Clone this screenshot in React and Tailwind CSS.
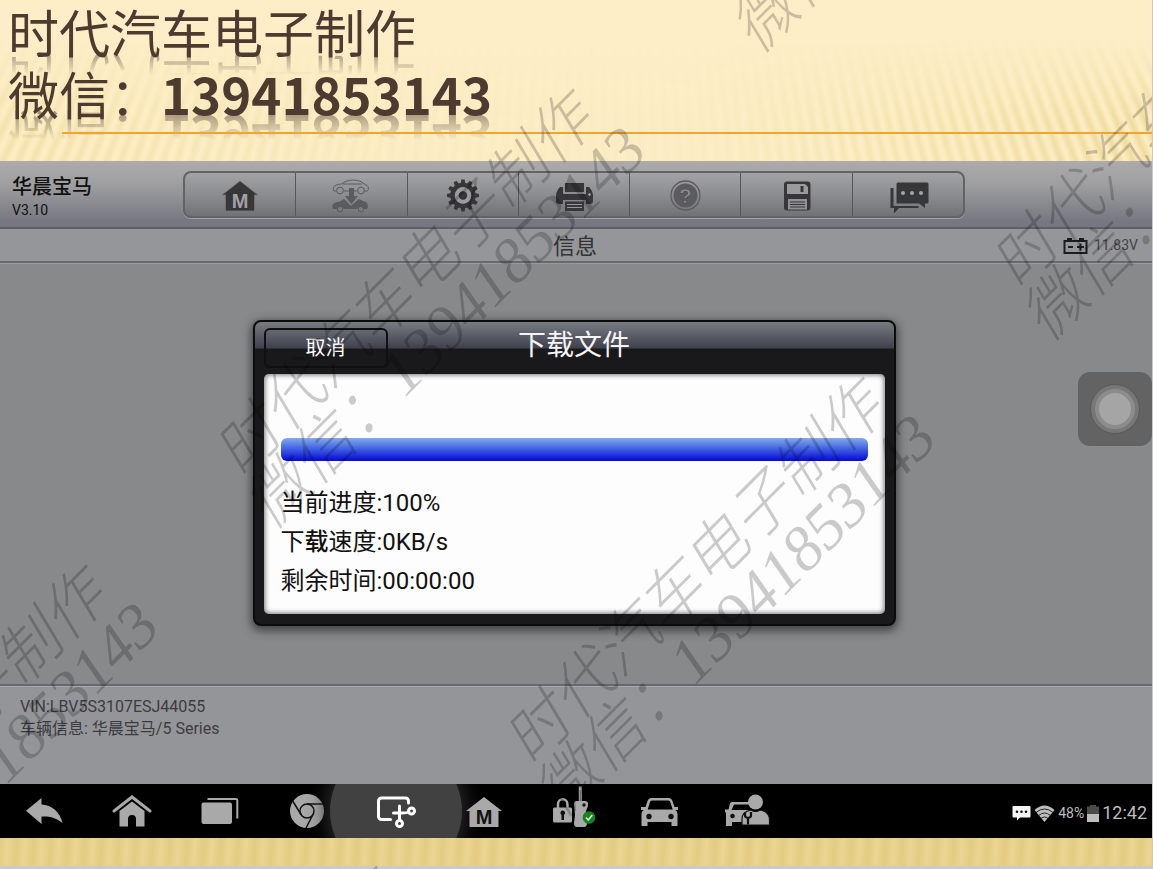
import { useId } from 'react';

const ui = "font-[Roboto,'Noto_Sans_CJK_SC',sans-serif]";

const watermarks = [
  { left: 425, top: 307 },
  { left: 715, top: 595 },
  { left: 912, top: -169 },
  { left: 1202, top: 119 },
  { left: -62, top: 783 },
  { left: 228, top: 1084 },
];

const Icon = ({ children, className = '' }) => (
  <svg
    viewBox="0 0 44 36"
    className={`relative h-9 w-11 overflow-visible ${className}`}
    fill="currentColor"
    aria-hidden="true"
  >
    {children}
  </svg>
);

const HomeM = ({ letter, outline }) => (
  <Icon>
    <path d="M22 4 40 18h-3.5v16h-29V18H4L22 4Z" stroke={outline} strokeWidth="0.8" />
    <text
      x="22"
      y="31"
      textAnchor="middle"
      fontSize="20"
      fontWeight="700"
      fontFamily="Liberation Sans, sans-serif"
      fill={letter}
    >
      M
    </text>
  </Icon>
);

const VehicleSwap = () => (
  <Icon className="text-[#5b5b5f]">
    <path
      d="M5 14c-3-5 3-7 8-7 4-5 17-5 21-1l3 2c3 1 3 5 1 6h-3M15 14h13M5 14h2M14 7h19"
      fill="none"
      stroke="currentColor"
      strokeWidth="1"
    />
    <circle cx="11" cy="13.500" r="3.400" fill="none" stroke="currentColor" strokeWidth="1" />
    <circle cx="32" cy="13.500" r="3.400" fill="none" stroke="currentColor" strokeWidth="1" />
    <path d="M20 11h5v8h4l-6.500 8-6.500-8h4Z" />
    <path d="M4 32c-2-5 1-7 6-7l5-3 7 7 8-7 4 2c5 1 6 5 4 8h-3a4 4 0 0 0-7 0H15a4 4 0 0 0-7 0Z" />
    <circle cx="11" cy="32" r="2.800" fill="none" stroke="currentColor" strokeWidth="1" />
    <circle cx="32" cy="32" r="2.800" fill="none" stroke="currentColor" strokeWidth="1" />
  </Icon>
);

const Gear = () => (
  <Icon>
    {[0, 30, 60, 90, 120, 150, 180, 210, 240, 270, 300, 330].map((deg) => (
      <path key={deg} d="M19.600 7 20.400 2.500h3.200L24.400 7Z" transform={`rotate(${deg} 22 18.500)`} />
    ))}
    <circle cx="22" cy="18.500" r="10.500" fill="none" stroke="currentColor" strokeWidth="4.500" />
    <circle cx="22" cy="18.500" r="6.200" fill="none" stroke="#9c9c9f" strokeWidth="4" />
    <circle cx="22" cy="18.500" r="4.200" />
  </Icon>
);

const Printer = () => (
  <Icon>
    <path d="M13 6h19v9H13Z" />
    <path d="M8 10h3v7h23v-7h3c2 2 4 5 4 9v5c0 2-1 3-3 3h-4v-4H11v4H7c-2 0-3-1-3-3v-5c0-4 2-7 4-9Z" />
    <path d="M13 24.500h19V34H13Z" />
    <path d="M15 27.500h15M15 30.500h15" stroke="#98989b" strokeWidth="1.200" />
    <circle cx="37.500" cy="17.500" r="1.200" fill="#aaa" />
  </Icon>
);

const Help = () => (
  <Icon className="text-[#5c5c60]">
    <circle cx="22.500" cy="18.500" r="14.500" fill="none" stroke="currentColor" strokeWidth="1.300" />
    <circle cx="22.500" cy="18.500" r="12" />
    <text
      x="22.500"
      y="26"
      textAnchor="middle"
      fontSize="21"
      fontWeight="700"
      fontFamily="Liberation Sans, sans-serif"
      fill="#8b8b8f"
      stroke="#444"
      strokeWidth="0.500"
    >
      ?
    </text>
  </Icon>
);

const Floppy = () => (
  <Icon>
    <rect x="9" y="4.500" width="26.500" height="29" rx="3" />
    <path d="M12 7h18l3 3v7H12Z" fill="#9b9b9d" />
    <path d="M25.500 9h3v6h-3Z" />
    <path d="M13 22h19v10.500H13Z" fill="#929296" />
    <path d="M15 25h15M15 27.500h15M15 30h15" stroke="currentColor" strokeWidth="1" />
  </Icon>
);

const Chat = () => (
  <Icon>
    <path d="M4.500 11h3v18h25v2H13l-5 5.500V31H4.500Z" />
    <path d="M12 5.500h29a1.500 1.500 0 0 1 1.500 1.500v18a1.500 1.500 0 0 1-1.500 1.500h-2V31l-6-4.500H10.500V7A1.500 1.500 0 0 1 12 5.500Z" />
    <g fill="#a5a5a7">
      <circle cx="17" cy="16" r="2" />
      <circle cx="26" cy="16" r="2" />
      <circle cx="35" cy="16" r="2" />
    </g>
  </Icon>
);

const BackIcon = () => (
  <Icon>
    <path d="M4 17.700 19.500 5v6.500C30 12 38 19 40.500 30 34 24.500 27 23 19.500 23.500V31Z" />
  </Icon>
);

const HomeIcon = () => (
  <Icon>
    <path d="M4 18 22 4l18 14" fill="none" stroke="currentColor" strokeWidth="3" strokeLinecap="round" />
    <path d="M22 8.500 34.500 18v15.500H26V26a4 4 0 0 0-8 0v7.500H9.500V18Z" />
  </Icon>
);

const RecentsIcon = () => (
  <Icon>
    <rect x="3.500" y="9.500" width="30.500" height="21.500" rx="2" />
    <path
      d="M9.500 6H38a1.300 1.300 0 0 1 1.300 1.300V25.500"
      fill="none"
      stroke="currentColor"
      strokeWidth="2"
    />
  </Icon>
);

const ChromeIcon = () => (
  <Icon>
    <circle cx="21" cy="18" r="17" />
    <circle cx="21" cy="18" r="7" fill="none" stroke="#111" strokeWidth="1.500" />
    <path d="M21 11h16.500M7 8.500l8 13M27 21.500 20 35" fill="none" stroke="#111" strokeWidth="1.500" />
  </Icon>
);

const ScreenshotIcon = () => (
  <Icon className="text-white">
    <g fill="none" stroke="currentColor" strokeWidth="3" strokeLinecap="round">
      <path d="M34.500 10V8a3 3 0 0 0-3-3H7.500a3 3 0 0 0-3 3v15.500a3 3 0 0 0 3 3h9" />
      <path d="M25.500 13v14M19.500 20H28q5 0 7-1M25.500 20" />
      <circle cx="37.500" cy="18" r="3" />
      <circle cx="25.500" cy="30.500" r="3" />
    </g>
  </Icon>
);

const KeyIcon = () => (
  <Icon>
    <path d="M8 15v-4a4.700 4.700 0 0 1 9.400 0v4" fill="none" stroke="currentColor" strokeWidth="2.500" />
    <rect x="3" y="14.500" width="19" height="15" rx="1.500" />
    <path d="M12.700 17.500a2.500 2.500 0 0 1 1.300 4.600V27h-2.500v-4.900a2.500 2.500 0 0 1 1.200-4.600Z" fill="#111" />
    <path d="M30.300-6.500V8" stroke="currentColor" strokeWidth="3" />
    <path d="M30.300-3V8" stroke="#444" strokeWidth="0.800" />
    <path d="M27 8h8q3 0 3 3c0 5-3 6-2 11l1 8q0 4-3 4h-7q-3 0-3-4l1-8-1-11q0-3 3-3Z" />
    <circle cx="34" cy="12" r="1.700" fill="#111" />
    <circle cx="39" cy="24.500" r="6.300" fill="#16831f" />
    <path d="m36 24.500 2.300 2.500 4-5" fill="none" stroke="#d6ead6" strokeWidth="1.600" />
  </Icon>
);

const CarIcon = () => (
  <Icon>
    <path
      fillRule="evenodd"
      d="M13 5h18q2.500 0 3.300 2.500L36.500 14h3.500v3h-2.500q2 1.500 2 4v12h-6v-4h-24v4h-6V21q0-2.500 2-4H3v-3h4.500l2.200-6.500Q10.500 5 13 5Zm.7 2.500q-1.200 0-1.700 1.500l-2.300 7.500h25L32.300 9q-.500-1.500-1.800-1.500Z"
    />
    <circle cx="11" cy="23.500" r="2.700" fill="#111" />
    <circle cx="33" cy="23.500" r="2.700" fill="#111" />
  </Icon>
);

const MechanicIcon = () => (
  <Icon>
    <path
      fillRule="evenodd"
      d="M6 9h17v2.500H8L5.500 17H22v12H6v4H0V20l-1-1v-2.500h3.500L4 10.500Q4.500 9 6 9Z"
    />
    <circle cx="6.500" cy="23" r="2.300" fill="#111" />
    <circle cx="29.500" cy="9" r="7.500" />
    <path
      d="M25 17q4.500 3 9 0c6 1 9.500 5 9.500 10v5H16v-6c0-5 4-8 9-9Z"
      stroke="#111"
      strokeWidth="1.200"
    />
    <path
      d="M19 19v3.500q0 2 3 2.500v6.500M25 19v3.500q0 2-3 2.500"
      fill="none"
      stroke="#111"
      strokeWidth="2.200"
    />
  </Icon>
);

const toolbar = [
  { label: '主页', icon: <HomeM letter="#a2a2a5" outline="#77777a" /> },
  { label: '切换车辆', icon: <VehicleSwap />, disabled: true },
  { label: '设置', icon: <Gear /> },
  { label: '打印', icon: <Printer /> },
  { label: '帮助', icon: <Help />, disabled: true },
  { label: '保存', icon: <Floppy /> },
  { label: '数据记录', icon: <Chat /> },
];

const navItems = [
  { label: '返回', icon: <BackIcon /> },
  { label: '主屏幕', icon: <HomeIcon /> },
  { label: '最近', icon: <RecentsIcon /> },
  { label: 'Chrome', icon: <ChromeIcon /> },
  { label: '截屏', icon: <ScreenshotIcon />, active: true },
  { label: 'MaxiSys', icon: <HomeM letter="#111" /> },
  { label: 'VCI', icon: <KeyIcon /> },
  { label: '车辆', icon: <CarIcon /> },
  { label: '服务', icon: <MechanicIcon /> },
];

const SlideHeader = () => (
  <header className="relative h-[161px] shrink-0 overflow-hidden bg-[#fdeec7]">
    {/* Fan of soft rays, stronger at both sides */}
    <div className="absolute inset-0 bg-[repeating-conic-gradient(from_0deg_at_52%_-1120px,#ead592_0deg,#fcecbe_0.25deg,#fcecbe_0.31deg,#ead592_0.56deg)] [mask-composite:intersect] [mask-image:linear-gradient(to_bottom,transparent_38px,black_120px),linear-gradient(to_right,rgba(0,0,0,0.5),rgba(0,0,0,0.12)_38%,rgba(0,0,0,0.1)_60%,rgba(0,0,0,0.8))]" />
    <h1 className="relative pl-2 font-['Noto_Sans_CJK_SC',sans-serif] text-[51px] leading-[62px] font-normal text-[#4d3b30]">
      <span className="block h-[62px] [-webkit-box-reflect:below_-15px_linear-gradient(transparent_55%,rgba(0,0,0,0.6))]">
        时代汽车电子制作
      </span>
      <span className="flex h-[62px] [-webkit-box-reflect:below_-18px_linear-gradient(transparent_45%,rgba(0,0,0,0.6))]">
        微信：<b className="font-bold">13941853143</b>
      </span>
    </h1>
    <div className="absolute top-[132px] right-0 left-[62px] h-[2px] bg-[#f0a52e]" />
  </header>
);

const DownloadDialog = () => {
  const id = useId();
  return (
    <section
      role="dialog"
      aria-labelledby={id}
      className="w-[643px] rounded-lg border-2 border-[#0c0c0d] bg-[#19191b] px-[9px] pb-[10px] shadow-[0_3px_9px_2px_rgba(40,40,40,0.7)] bg-[linear-gradient(#787c81,#3f414d_26px,#19191b_27px)]"
    >
      <div className="grid h-[52px] grid-cols-[1fr_auto_1fr] items-center">
        <button
          type="button"
          className="h-10 w-[124px] rounded-md border-2 border-[#101012] text-[20px] text-white"
        >
          取消
        </button>
        <h2 id={id} className="pb-1 text-[28px] leading-9 text-[#f4f4f6]">
          下载文件
        </h2>
      </div>
      <div className="h-[240px] rounded-[5px] bg-[#fdfdfd] px-[17px] pt-[64px] shadow-[inset_0_0_5px_1px_rgba(0,0,0,0.55)]">
        <div
          role="progressbar"
          aria-label="当前进度"
          aria-valuenow={100}
          className="h-[23px] rounded-md bg-[linear-gradient(#86a8ea,#5d85e6_25%,#1420dc_85%,#0a0ac8)]"
        />
        <div className="mt-[23px] text-[24px] leading-[39px] text-[#111]">
          <p>当前进度:100%</p>
          <p>
            下<b className="font-medium">载</b>速度:0KB/s
          </p>
          <p>剩余时间:00:00:00</p>
        </div>
      </div>
    </section>
  );
};

const StatusArea = () => (
  <div className="ml-auto flex items-center gap-[3px] pt-1 pr-[5px] text-[#bdbdbd]">
    <svg viewBox="0 0 19 16" className="h-4 w-[19px]" fill="#f5f5f5" aria-hidden="true">
      <path d="M1.500 1h16a1 1 0 0 1 1 1v9.500a1 1 0 0 1-1 1H8L5 15.500V12.500H1.500a1 1 0 0 1-1-1V2a1 1 0 0 1 1-1Z" />
      <circle cx="5" cy="6.700" r="1.300" fill="#111" />
      <circle cx="9.500" cy="6.700" r="1.300" fill="#111" />
      <circle cx="14" cy="6.700" r="1.300" fill="#111" />
    </svg>
    <svg viewBox="0 0 21 17" className="h-[17px] w-[21px]" aria-hidden="true">
      <path d="M.5 5Q10.500-4 20.500 5l-10 12Z" fill="#bdbdbd" />
      <path d="M2 7.500q8.500-7 17 0M4.500 10.500q6-5 12 0M7 13.300q3.500-3 7 0" fill="none" stroke="#222" />
    </svg>
    <span className="text-sm">48%</span>
    <svg viewBox="0 0 12 17" className="h-[17px] w-3" aria-hidden="true">
      <path d="M3 0h6v1.500h3V9H0V1.500h3Z" fill="#4b4b4b" />
      <path d="M0 9h12v8H0Z" fill="#bdbdbd" />
    </svg>
    <time className="text-lg leading-5">12:42</time>
  </div>
);

const App = () => {
  return (
    <div className="relative flex min-h-screen flex-col overflow-hidden border-r border-[#c9c9cc] bg-[#cbcbcd]">
      <SlideHeader />

      <main className={`flex flex-1 flex-col bg-[#88898b] ${ui}`}>
        {/* Toolbar */}
        <div className="flex h-[68px] items-start border-b-2 border-[#5f6069] bg-[linear-gradient(#ababab,#9f9fa0_35%,#767780_92%)] pt-[10px] pr-[187px]">
          <div className="w-[183px] pt-[5px] pl-3 text-[#111]">
            <div className="text-[20px] leading-[22px] font-medium">华晨宝马</div>
            <div className="text-sm leading-6">V3.10</div>
          </div>
          <div className="flex h-[47px] flex-1 divide-x divide-[#55565a] rounded-lg border-2 border-[#626367] bg-[linear-gradient(#a3a3a4,#8c8d90_50%,#717278)] shadow-[0_1px_0_#a0a0a4]">
            {toolbar.map((item) => (
              <button
                key={item.label}
                type="button"
                aria-label={item.label}
                disabled={item.disabled}
                className="flex flex-1 items-center justify-center text-[#37373a]"
              >
                {item.icon}
              </button>
            ))}
          </div>
        </div>

        {/* Page title */}
        <div className="grid h-[34px] grid-cols-[1fr_auto_1fr] items-center border-b-2 border-[#68696c] bg-[#959699] pr-[14px]">
          <span />
          <h2 className="pt-1 pl-3 text-[22px] leading-7 text-[#333]">信息</h2>
          <div className="flex items-center justify-end gap-[6px] text-sm text-[#444]">
            <svg viewBox="0 0 25 17" className="h-[17px] w-[25px]" fill="none" stroke="#1c1c1e" strokeWidth="2" aria-hidden="true">
              <path d="M1.500 4h22v12h-22ZM4 2h5M16 2h5M5 10h5M14 10h7M17.500 6.500v7" />
            </svg>
            11.83V
          </div>
        </div>

        {/* Workspace */}
        <div className="relative flex flex-1 items-start justify-center border-t border-[#9a9b9d] pt-[56px] pr-1">
          <DownloadDialog />
          <button
            type="button"
            aria-label="悬浮按钮"
            className="absolute top-[108px] right-0 flex size-[74px] items-center justify-center rounded-xl bg-[#636364]"
          >
            <span className="flex size-[50px] items-center justify-center rounded-full border border-[#595959] bg-[#777778]">
              <span className="size-10 rounded-full border-4 border-[#8c8c8c] bg-[#a5a5a5]" />
            </span>
          </button>
        </div>

        {/* Vehicle info */}
        <div className="h-[100px] border-t-2 border-[#68696c] bg-[#949599] px-5 pt-[10px] text-base leading-[22px] text-[#3c3c40] shadow-[inset_0_1px_0_#a6a7aa]">
          <p>VIN:LBV5S3107ESJ44055</p>
          <p>车辆信息: 华晨宝马/5 Series</p>
        </div>
      </main>

      <nav className={`relative flex h-[54px] shrink-0 overflow-hidden bg-black ${ui}`}>
        {navItems.map((item) => (
          <button
            key={item.label}
            type="button"
            aria-label={item.label}
            className="relative flex w-[88px] items-center justify-center text-[#a9a9a9]"
          >
            {item.active && (
              <span className="absolute size-[132px] shrink-0 rounded-full bg-[#414141] shadow-[0_0_20px_4px_#2a2a2a]" />
            )}
            {item.icon}
          </button>
        ))}
        <StatusArea />
      </nav>

      <footer className="mb-[3px] h-7 shrink-0 bg-[repeating-linear-gradient(94deg,#e3cb82_0px,#ead592_8px,#e3cb82_17px)]" />

      {/* Watermark */}
      <div className="pointer-events-none absolute inset-0 overflow-hidden" aria-hidden="true">
        {watermarks.map((mark) => (
          <div
            key={`${mark.left}-${mark.top}`}
            style={{ left: mark.left, top: mark.top }}
            className="absolute -translate-x-1/2 -translate-y-1/2 -rotate-45 text-center font-['Liberation_Serif','Noto_Sans_CJK_SC',serif] text-[63px] leading-[58px] font-light whitespace-nowrap text-black/20 italic"
          >
            时代汽车电子制作
            <br />
            微信：13941853143
          </div>
        ))}
      </div>
    </div>
  );
};

export default App;
